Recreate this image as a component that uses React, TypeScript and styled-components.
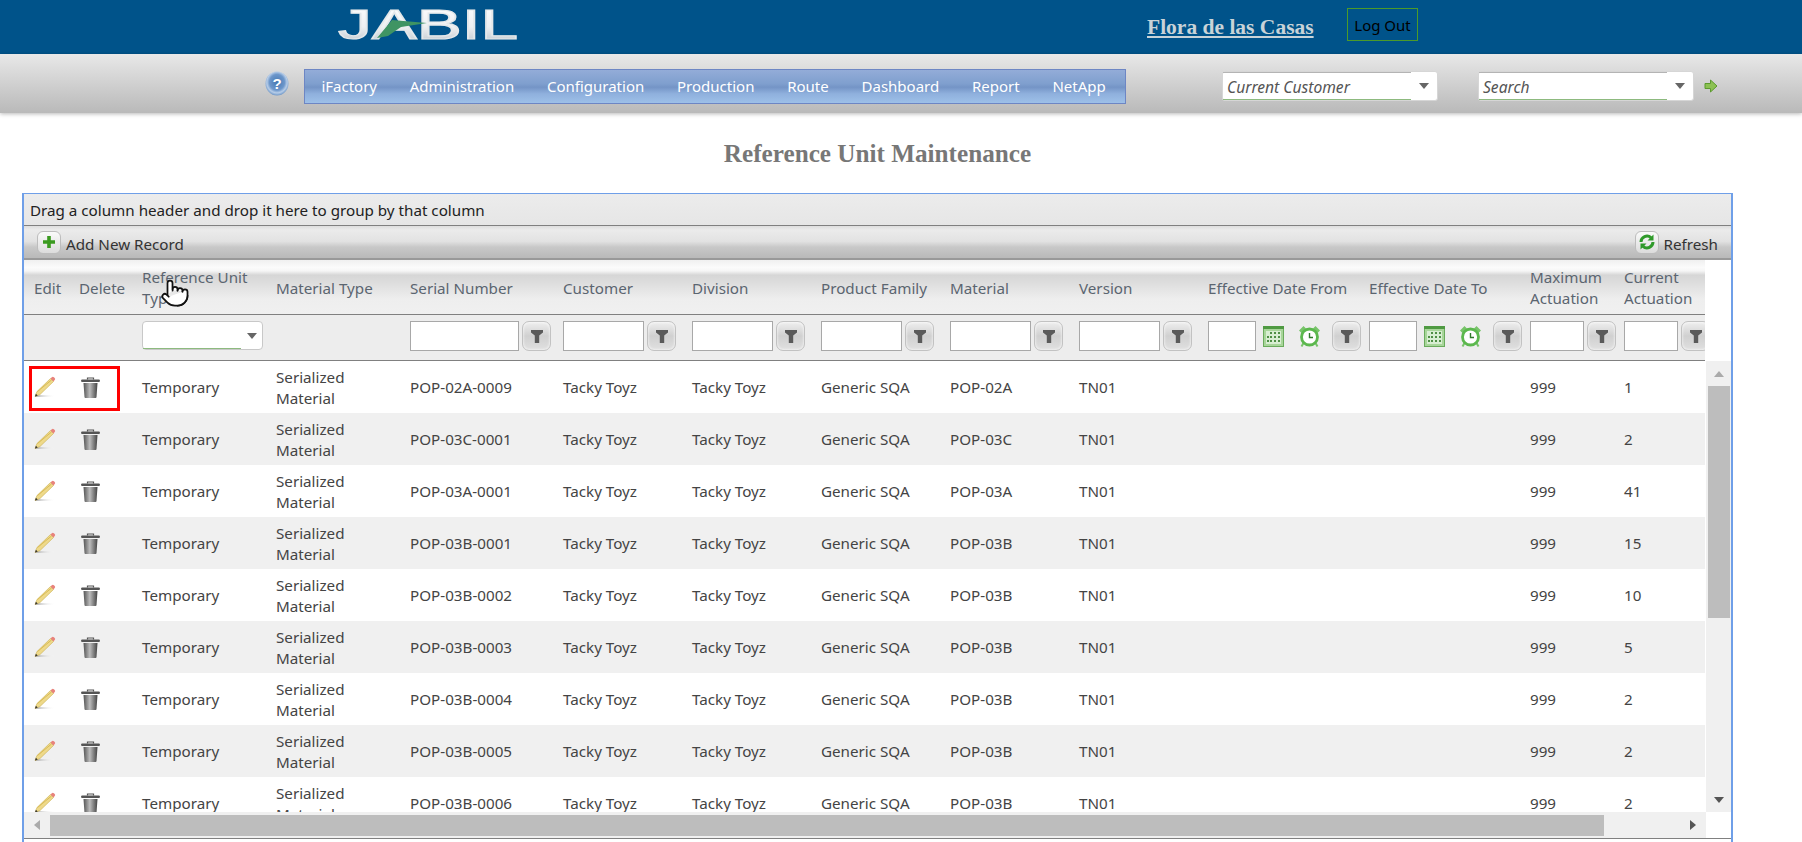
import React from "react";
import styled, { createGlobalStyle } from "styled-components";
import { Pointer } from "lucide-react";

const UI = `"Noto Sans", "Open Sans", sans-serif`;
const COLS = "48px 62px 134px 134px 153px 129px 129px 129px 129px 129px 161px 161px 94px 89px";

const Global = createGlobalStyle`
  html, body { margin: 0; padding: 0; height: 842px; overflow: hidden; background: #fff; font-family: ${UI}; }
  * { box-sizing: border-box; }
`;
const Page = styled.div`height: 842px; overflow: hidden; display: flex; flex-direction: column;`;
const TopBar = styled.header`height: 54px; flex: none; background: #00538a; display: flex; align-items: flex-start; padding-left: 337px;`;
const LogoWrap = styled.div`width: 182px; height: 54px; flex: none;`;
const UserName = styled.a`margin: 15px 0 0 628px; font: bold 21.5px/25px "Liberation Serif", serif; color: #c9d3d8; text-decoration: underline; width: 168px; white-space: nowrap;`;
const LogOut = styled.button`margin: 8px 0 0 32px; width: 71px; height: 33px; border: 1px solid #4c9a2a; background: transparent; color: #000; font: 15px ${UI}; padding: 0; white-space: nowrap;`;
const NavBar = styled.nav`height: 59px; flex: none; background: linear-gradient(#e8e8e8, #b9b9b9); box-shadow: 0 1px 4px rgba(0,0,0,.28); display: flex; align-items: flex-start; padding-left: 265px; position: relative;`;
const Help = styled.div`width: 24px; height: 25px; margin-top: 17px; flex: none;`;
const Menu = styled.ul`list-style: none; margin: 15px 0 0 15px; padding: 0; width: 822px; height: 35px; display: flex; border: 1px solid #6d86c4; background: linear-gradient(#93acd8 0%, #7f9fce 42%, #7494c6 52%, #8fb0dd 72%, #9dc0e8 100%);`;
const MenuItem = styled.li`padding: 0 16.4px; line-height: 33px; font-size: 15px; color: #fff; white-space: nowrap;`;
const Combo = styled.div<{ $gap: number }>`margin: 17px 0 0 ${p => p.$gap}px; width: 216px; height: 30px; flex: none; display: flex; background: #fff; border: 1px solid #d6d6d6; border-radius: 3px;`;
const ComboField = styled.div`width: 188px; border-top: 1px solid #b4b4b4; border-bottom: 1px solid #8dba7f; font-style: italic; font-size: 15.6px; line-height: 29px; color: #555; padding-left: 4px; white-space: nowrap;`;
const ComboArrow = styled.div`flex: 1; display: flex; align-items: center; justify-content: center;`;
const Tri = styled.i<{ $dir: "down" | "up" | "left" | "right"; $size?: number; $color?: string }>`
  display: block; width: 0; height: 0; border-style: solid; border-color: transparent;
  border-width: ${p => p.$size ?? 5}px;
  ${p => p.$dir === "down" && `border-top-color: ${p.$color ?? "#666"}; border-bottom-width: 0; border-top-width: ${(p.$size ?? 5) + 1}px;`}
  ${p => p.$dir === "up" && `border-bottom-color: ${p.$color ?? "#666"}; border-top-width: 0; border-bottom-width: ${(p.$size ?? 5) + 1}px;`}
  ${p => p.$dir === "left" && `border-right-color: ${p.$color ?? "#666"}; border-left-width: 0; border-right-width: ${(p.$size ?? 5) + 1}px;`}
  ${p => p.$dir === "right" && `border-left-color: ${p.$color ?? "#666"}; border-right-width: 0; border-left-width: ${(p.$size ?? 5) + 1}px;`}
`;
const GoArrow = styled.div`margin: 22px 0 0 10px; width: 14px; height: 14px; flex: none;`;
const Content = styled.main`margin-left: 22px; width: 1711px; flex: 1; min-height: 0; display: flex; flex-direction: column;`;
const Title = styled.h1`margin: 0; height: 80px; padding-top: 27px; text-align: center; font: bold 25.2px/28px "Liberation Serif", serif; color: #777;`;
const Panel = styled.section`flex: 1; min-height: 0; border: 2px solid #6f9fe8; border-top-width: 1px; border-bottom: 0; display: flex; flex-direction: column; background: #fff;`;
const GroupBar = styled.div`height: 32px; flex: none; background: linear-gradient(#ececec, #e6e6e6); border-bottom: 1px solid #808080; font-size: 15.2px; line-height: 32px; color: #222; padding-left: 6px; white-space: nowrap;`;
const ToolBar = styled.div`height: 34px; flex: none; border-bottom: 2px solid #999; background: linear-gradient(#dedede 0%, #ebebeb 12%, #e2e2e2 48%, #c8c8c8 66%, #b9b9b9 100%); display: flex; align-items: center; padding: 3px 13px 0 13px;`;
const ToolButton = styled.span<{ $right?: boolean }>`display: flex; align-items: center; gap: 5px; font-size: 15.2px; color: #333; ${p => p.$right ? "margin-left: auto;" : ""}`;
const ToolIcon = styled.span`width: 24px; height: 23px; margin-top: -3px; display: flex; align-items: center; justify-content: center; border-radius: 6px; border: 1px solid #bdbdbd; background: linear-gradient(#fafafa, #dcdcdc);`;
const Grid = styled.div`display: grid; grid-template-columns: 1682px 25px; grid-template-rows: 101px 451px 26px;`;
const Head = styled.div`grid-column: 1 / 2; width: 1681px; position: relative; display: flex; flex-direction: column;`;
const HeadRow = styled.div`height: 55px; flex: none; display: grid; grid-template-columns: ${COLS}; border-bottom: 1px solid #808080; background: linear-gradient(#f0f0f0 0%, #fbfbfb 14%, #f6f6f6 20%, #d6d6d6 28%, #dcdcdc 40%, #eeeeee 72%, #f0f0f0 100%);`;
const HeadCell = styled.div<{ $pad?: number }>`padding: 2px 8px 0 ${p => p.$pad ?? 8}px; display: flex; align-items: center; font-size: 15.2px; line-height: 21px; color: #5b6570;`;
const FilterRow = styled.div`height: 46px; flex: none; display: grid; grid-template-columns: ${COLS}; border-bottom: 1px solid #808080; background: #ededed; overflow: hidden;`;
const FilterCell = styled.div`padding: 6px 0 0 8px; display: flex; align-items: flex-start;`;
const FilterInput = styled.div<{ $w: number }>`width: ${p => p.$w}px; height: 30px; flex: none; background: #fff; border: 1px solid #a8a8a8;`;
const FilterBtn = styled.div<{ $ml?: number }>`width: 29px; height: 30px; margin-left: ${p => p.$ml ?? 3}px; flex: none; border: 1px solid #c2c2c2; border-radius: 7px; box-shadow: inset 0 0 3px #fff; background: linear-gradient(#efefef, #d0d0d0 50%, #e0e0e0); display: flex; align-items: center; justify-content: center;`;
const DateIcon = styled.div<{ $ml: number }>`width: 21px; height: 21px; margin: 5px 0 0 ${p => p.$ml}px; flex: none;`;
const FilterCombo = styled.div`width: 121px; height: 29px; display: flex; background: #fff; border: 1px solid #c8c8c8; border-radius: 4px;`;
const FilterComboField = styled.div`width: 98px; border-bottom: 1px solid #8dba7f;`;
const Body = styled.div`overflow: hidden; width: 1682px; height: 451px;`;
const Row = styled.div<{ $alt: boolean }>`height: 52px; width: 1681px; position: relative; display: grid; grid-template-columns: ${COLS}; background: ${p => p.$alt ? "#f0f0f0" : "#fff"};`;
const Cell = styled.div<{ $pad?: number; $top?: number }>`padding: ${p => p.$top ?? 0}px 8px 0 ${p => p.$pad ?? 8}px; display: flex; align-items: center; font-size: 15.2px; line-height: 21px; color: #444;`;
const Highlight = styled.div`position: absolute; left: 5px; top: 5px; width: 91px; height: 45px; border: 3px solid #f00; pointer-events: none;`;
const VScroll = styled.div`background: #f0f0f0; display: flex; flex-direction: column; align-items: center; padding: 0 1px; position: relative;`;
const VCap = styled.div`height: 25px; width: 100%; flex: none; display: flex; align-items: center; justify-content: center;`;
const VThumb = styled.div`height: 232px; width: 22px; flex: none; background: #bdbdbd;`;
const VSpacer = styled.div`flex: 1;`;
const HScroll = styled.div`background: #f0f0f0; display: flex; align-items: center; width: 1682px;`;
const HCap = styled.div`width: 26px; flex: none; display: flex; justify-content: center;`;
const HThumb = styled.div`width: 1554px; height: 21px; flex: none; background: #bdbdbd;`;
const Cursor = styled.div`position: absolute; left: 136px; top: 18px; line-height: 0; color: #111;`;
const Footer = styled.div`border-top: 1px solid #808080; flex: 1;`;

const Logo = () => (
  <svg width="182" height="54" viewBox="0 0 182 54">
    <defs>
      <linearGradient id="lg" x1="0" y1="0" x2="0" y2="1">
        <stop offset="0" stopColor="#ffffff" /><stop offset=".55" stopColor="#eef0f2" /><stop offset="1" stopColor="#b3bec6" />
      </linearGradient>
    </defs>
    <text x="1" y="39" fontFamily="Liberation Sans" fontWeight="400" fontSize="42" fill="url(#lg)" stroke="#e4e8ea" strokeWidth="1.2" textLength="180" lengthAdjust="spacingAndGlyphs">JABIL</text>
    <polygon points="40,38 55,20 90,23 64,27 51,36" fill="#3f9463" />
  </svg>
);
const HelpIcon = () => (
  <svg width="24" height="25" viewBox="0 0 24 25">
    <defs><radialGradient id="hg" cx=".5" cy=".45" r=".55"><stop offset="0" stopColor="#4678b2" /><stop offset=".6" stopColor="#6d97cb" /><stop offset=".8" stopColor="#b7cde8" /><stop offset="1" stopColor="#6f97c8" /></radialGradient></defs>
    <ellipse cx="12" cy="12.5" rx="11.5" ry="12" fill="url(#hg)" />
    <text x="12" y="17.5" textAnchor="middle" fontFamily="Liberation Sans" fontWeight="700" fontSize="15" fill="#fff">?</text>
  </svg>
);
const Go = () => (
  <svg width="14" height="14" viewBox="0 0 14 14"><path d="M1 4.500h5.500V1L13 7l-6.500 6V9.500H1z" fill="#8cc152" stroke="#5b9a2e" /></svg>
);
const PlusIcon = () => (
  <svg width="14" height="14" viewBox="0 0 14 14"><path d="M5.200 1h3.600v4.200H13v3.600H8.800V13H5.200V8.800H1V5.200h4.200z" fill="#3a9a1f" /></svg>
);
const RefreshIcon = () => (
  <svg width="18" height="18" viewBox="0 0 18 18" fill="none">
    <path d="M3 9a6 6 0 0 1 10-4.400" stroke="#2f9a2a" strokeWidth="3" />
    <path d="M15 9a6 6 0 0 1-10 4.400" stroke="#2f9a2a" strokeWidth="3" />
    <path d="M15.500 1.500v6h-6z" fill="#2f9a2a" /><path d="M2.500 16.500v-6h6z" fill="#2f9a2a" />
  </svg>
);
const Funnel = () => (
  <svg width="12" height="13" viewBox="0 0 12 13"><path d="M0 0h12v2.500L8.200 5.500V13H3.800V5.500L0 2.500z" fill="#5a5a5a" /></svg>
);
const Calendar = () => (
  <svg width="21" height="21" viewBox="0 0 21 21">
    <rect x=".5" y=".5" width="20" height="20" fill="#a8d69a" stroke="#6aab5c" />
    <rect x="0" y="0" width="21" height="3" fill="#4f9a42" />
    <rect x="3" y="5" width="15" height="13" fill="#d8eed2" />
    <path d="M7 6h2v2H7zM11 6h2v2h-2zM15 6h2v2h-2zM7 10h2v2H7zM11 10h2v2h-2zM15 10h2v2h-2zM7 14h2v2H7zM11 14h2v2h-2zM15 14h2v2h-2zM4 10h2v2H4zM4 14h2v2H4z" fill="#4f8f45" />
  </svg>
);
const Clock = () => (
  <svg width="21" height="21" viewBox="0 0 21 21" fill="none">
    <path d="M0 4.500L4.500 0 7 2.500 2.500 7zM21 4.500L16.500 0 14 2.500 18.500 7z" fill="#78c46a" />
    <path d="M4.500 17l-2 3.500M16.500 17l2 3.500" stroke="#78c46a" strokeWidth="2" />
    <circle cx="10.500" cy="11" r="8" fill="#fff" stroke="#5cb84e" strokeWidth="2.800" />
    <path d="M10.500 7v4.500h3.500" stroke="#2f7a2a" strokeWidth="1.400" />
  </svg>
);
const Pencil = () => (
  <svg width="23" height="22" viewBox="0 0 23 22">
    <defs><linearGradient id="ps" x1="0" y1="0" x2="1" y2="0"><stop offset="0" stopColor="#aaa" /><stop offset="1" stopColor="#fff" stopOpacity="0" /></linearGradient></defs>
    <rect x="1" y="19" width="20" height="2" fill="url(#ps)" />
    <path d="M1 20.500l2-5L16.500 2.500l3 3L6 18.500z" fill="#eed98a" stroke="#c9ae4e" strokeWidth=".6" />
    <path d="M3.500 15.500L17.500 4" fill="none" stroke="#d9bb55" strokeWidth="1" />
    <path d="M1 20.500l.9-2.700 1.800 1.700z" fill="#333" />
    <path d="M16.500 2.500l1.300-1.300a1.500 1.500 0 0 1 2.100 0l.8.8a1.500 1.500 0 0 1 0 2.100l-1.200 1.400z" fill="#e8837c" />
  </svg>
);
const Trash = () => (
  <svg width="19" height="21" viewBox="0 0 19 21">
    <defs><linearGradient id="tg" x1="0" y1="0" x2="1" y2="0"><stop offset="0" stopColor="#555" /><stop offset=".45" stopColor="#bcbcbc" /><stop offset="1" stopColor="#444" /></linearGradient></defs>
    <path d="M6.500 2.400V1h6v1.400" fill="none" stroke="#555" strokeWidth="1.200" />
    <rect x="0" y="2.500" width="19" height="2.500" rx="1.200" fill="#555" />
    <path d="M2.500 6h14l-1 14a1 1 0 0 1-1 1h-10a1 1 0 0 1-1-1z" fill="url(#tg)" />
  </svg>
);

const menu = ["iFactory", "Administration", "Configuration", "Production", "Route", "Dashboard", "Report", "NetApp"];
const rows: [string, string, string][] = [
  ["POP-02A-0009", "POP-02A", "1"], ["POP-03C-0001", "POP-03C", "2"], ["POP-03A-0001", "POP-03A", "41"],
  ["POP-03B-0001", "POP-03B", "15"], ["POP-03B-0002", "POP-03B", "10"], ["POP-03B-0003", "POP-03B", "5"],
  ["POP-03B-0004", "POP-03B", "2"], ["POP-03B-0005", "POP-03B", "2"], ["POP-03B-0006", "POP-03B", "2"],
];
const heads = ["Reference Unit Type", "Material Type", "Serial Number", "Customer", "Division", "Product Family", "Material", "Version", "Effective Date From", "Effective Date To", "Maximum Actuation", "Current Actuation"];

const TextFilter = ({ w }: { w: number }) => (
  <FilterCell><FilterInput $w={w} /><FilterBtn><Funnel /></FilterBtn></FilterCell>
);
const DateFilter = () => (
  <FilterCell>
    <FilterInput $w={48} />
    <DateIcon $ml={7}><Calendar /></DateIcon>
    <DateIcon $ml={15}><Clock /></DateIcon>
    <FilterBtn $ml={12}><Funnel /></FilterBtn>
  </FilterCell>
);

export default function App() {
  return (
    <Page>
      <Global />
      <TopBar>
        <LogoWrap><Logo /></LogoWrap>
        <UserName>Flora de las Casas</UserName>
        <LogOut>Log Out</LogOut>
      </TopBar>
      <NavBar>
        <Help><HelpIcon /></Help>
        <Menu>{menu.map(m => <MenuItem key={m}>{m}</MenuItem>)}</Menu>
        <Combo $gap={96}><ComboField>Current Customer</ComboField><ComboArrow><Tri $dir="down" /></ComboArrow></Combo>
        <Combo $gap={40}><ComboField>Search</ComboField><ComboArrow><Tri $dir="down" /></ComboArrow></Combo>
        <GoArrow><Go /></GoArrow>
      </NavBar>
      <Content>
        <Title>Reference Unit Maintenance</Title>
        <Panel>
          <GroupBar>Drag a column header and drop it here to group by that column</GroupBar>
          <ToolBar>
            <ToolButton><ToolIcon><PlusIcon /></ToolIcon>Add New Record</ToolButton>
            <ToolButton $right><ToolIcon><RefreshIcon /></ToolIcon>Refresh</ToolButton>
          </ToolBar>
          <Grid>
            <Head>
              <HeadRow>
                <HeadCell $pad={10}>Edit</HeadCell>
                <HeadCell $pad={7}>Delete</HeadCell>
                {heads.map(h => <HeadCell key={h}>{h}</HeadCell>)}
              </HeadRow>
              <FilterRow>
                <FilterCell /><FilterCell />
                <FilterCell><FilterCombo><FilterComboField /><ComboArrow><Tri $dir="down" /></ComboArrow></FilterCombo></FilterCell>
                <FilterCell />
                <TextFilter w={109} />
                <TextFilter w={81} /><TextFilter w={81} /><TextFilter w={81} /><TextFilter w={81} /><TextFilter w={81} />
                <DateFilter /><DateFilter />
                <TextFilter w={54} /><TextFilter w={54} />
              </FilterRow>
              <Cursor><Pointer size={30} fill="#fff" strokeWidth={1.4} /></Cursor>
            </Head>
            <div />
            <Body>
              {rows.map((r, i) => (
                <Row key={r[0]} $alt={i % 2 === 1}>
                  <Cell $pad={10}><Pencil /></Cell>
                  <Cell $pad={9}><Trash /></Cell>
                  <Cell>Temporary</Cell>
                  <Cell $top={2}>Serialized Material</Cell>
                  <Cell>{r[0]}</Cell>
                  <Cell>Tacky Toyz</Cell>
                  <Cell>Tacky Toyz</Cell>
                  <Cell>Generic SQA</Cell>
                  <Cell>{r[1]}</Cell>
                  <Cell>TN01</Cell>
                  <Cell /><Cell />
                  <Cell>999</Cell>
                  <Cell>{r[2]}</Cell>
                  {i === 0 && <Highlight />}
                </Row>
              ))}
            </Body>
            <VScroll>
              <VCap><Tri $dir="up" $color="#aaa" /></VCap>
              <VThumb />
              <VSpacer />
              <VCap><Tri $dir="down" $color="#555" /></VCap>
            </VScroll>
            <HScroll>
              <HCap><Tri $dir="left" $color="#aaa" /></HCap>
              <HThumb />
              <VSpacer />
              <HCap><Tri $dir="right" $color="#555" /></HCap>
            </HScroll>
            <div />
          </Grid>
          <Footer />
        </Panel>
      </Content>
    </Page>
  );
}
